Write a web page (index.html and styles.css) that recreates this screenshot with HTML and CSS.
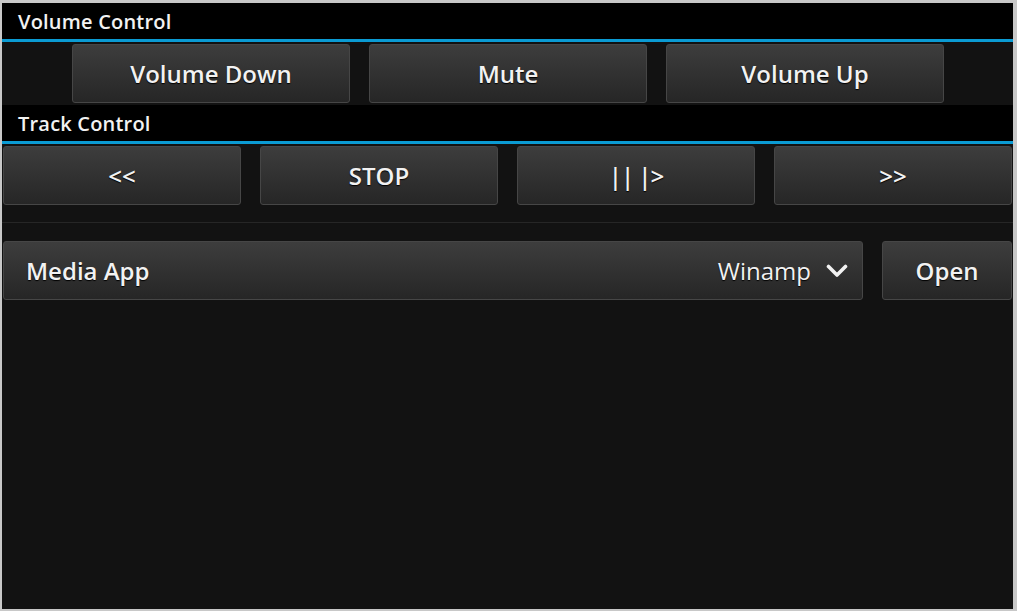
FILE: index.html
```html
<!DOCTYPE html>
<html lang="en">
<head>
    <meta charset="UTF-8">
    <meta name="viewport" content="width=device-width, initial-scale=1.0">
    <title>Remote Control</title>
    <link rel="stylesheet" href="styles.css">
</head>
<body>
    <div class="screen">
        <div class="section-header">Volume Control</div>
        <div class="row row-volume">
            <button class="btn">Volume Down</button>
            <button class="btn">Mute</button>
            <button class="btn">Volume Up</button>
        </div>

        <div class="section-header">Track Control</div>
        <div class="row row-track">
            <button class="btn">&lt;&lt;</button>
            <button class="btn">STOP</button>
            <button class="btn tight">|| |&gt;</button>
            <button class="btn">&gt;&gt;</button>
        </div>

        <div class="divider"></div>

        <div class="row row-app">
            <div class="btn dropdown">
                <span class="dropdown-label">Media App</span>
                <span class="dropdown-value">Winamp</span>
                <svg class="chevron" width="22" height="14" viewBox="0 0 22 14">
                    <path d="M2.5 2.5 L11 11 L19.5 2.5" fill="none" stroke="#f2f2f2" stroke-width="3.6" stroke-linecap="round" stroke-linejoin="round"/>
                </svg>
            </div>
            <button class="btn btn-open">Open</button>
        </div>
    </div>
</body>
</html>
```

FILE: styles.css
```css
body {
    margin: 0;
    background: #c8c8c8;
    font-family: 'Open Sans', 'DejaVu Sans', sans-serif;
    height: 611px;
    overflow: hidden;
}

.screen {
    margin: 3px 4px 2px 2px;
    height: 606px;
    background: #121212;
    color: #f2f2f2;
}

.section-header {
    height: 36px;
    background: #000000;
    border-bottom: 3px solid #0b9bd3;
    padding-left: 16px;
    font-size: 20px;
    font-weight: 600;
    line-height: 38px;
    letter-spacing: 0.2px;
}

.row {
    display: flex;
    gap: 19px;
}

.row-volume {
    justify-content: center;
    padding: 2px 0 2px 1px;
}

.row-volume .btn {
    width: 278px;
}

.row-track {
    padding: 2px 1px 0 1px;
}

.row-track .btn {
    flex: 1;
}

.divider {
    height: 1px;
    margin-top: 17px;
    background: #262626;
}

.row-app {
    padding: 18px 1px 0 1px;
}

.btn {
    height: 59px;
    box-sizing: border-box;
    border: 1px solid #464646;
    border-radius: 3px;
    background: linear-gradient(#3d3d3d, #262626);
    color: #f2f2f2;
    font-family: inherit;
    font-size: 24px;
    font-weight: 600;
    text-shadow: 0 1px 1px #000000;
    padding: 0;
}

.tight {
    letter-spacing: -1px;
}

.dropdown {
    flex: 1;
    display: flex;
    align-items: center;
    padding: 0 14px 0 22px;
}

.dropdown-label {
    flex: 1;
}

.dropdown-value {
    font-weight: 400;
    margin-right: 15px;
}

.btn-open {
    width: 130px;
}
```
